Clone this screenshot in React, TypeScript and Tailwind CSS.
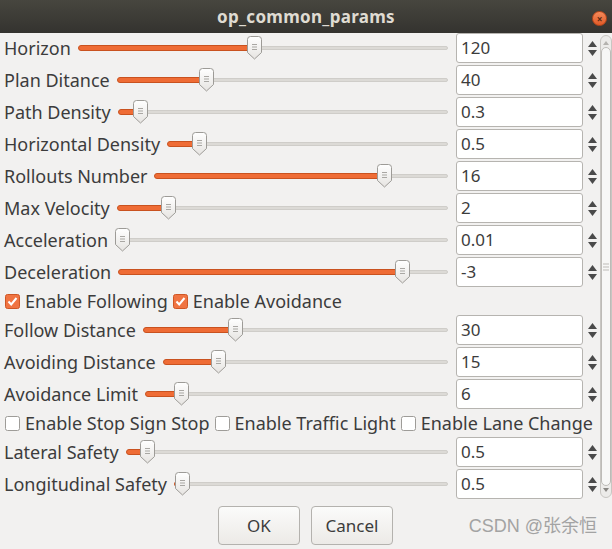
import React from "react";

type Row =
  | { kind: "slider"; label: string; value: string; frac: number }
  | { kind: "checks"; items: { label: string; checked: boolean }[] };

const rows: Row[] = [
  { kind: "slider", label: "Horizon", value: "120", frac: 0.475 },
  { kind: "slider", label: "Plan Ditance", value: "40", frac: 0.26 },
  { kind: "slider", label: "Path Density", value: "0.3", frac: 0.05 },
  { kind: "slider", label: "Horizontal Density", value: "0.5", frac: 0.094 },
  { kind: "slider", label: "Rollouts Number", value: "16", frac: 0.8 },
  { kind: "slider", label: "Max Velocity", value: "2", frac: 0.139 },
  { kind: "slider", label: "Acceleration", value: "0.01", frac: 0 },
  { kind: "slider", label: "Deceleration", value: "-3", frac: 0.88 },
  {
    kind: "checks",
    items: [
      { label: "Enable Following", checked: true },
      { label: "Enable Avoidance", checked: true },
    ],
  },
  { kind: "slider", label: "Follow Distance", value: "30", frac: 0.294 },
  { kind: "slider", label: "Avoiding Distance", value: "15", frac: 0.18 },
  { kind: "slider", label: "Avoidance Limit", value: "6", frac: 0.1 },
  {
    kind: "checks",
    items: [
      { label: "Enable Stop Sign Stop", checked: false },
      { label: "Enable Traffic Light", checked: false },
      { label: "Enable Lane Change", checked: false },
    ],
  },
  { kind: "slider", label: "Lateral Safety", value: "0.5", frac: 0.046 },
  { kind: "slider", label: "Longitudinal Safety", value: "0.5", frac: 0.004 },
];

function Handle() {
  return (
    <svg width="15" height="24" viewBox="0 0 15 24">
      <defs>
        <linearGradient id="hg" x1="0" y1="0" x2="0" y2="1">
          <stop offset="0" stopColor="#ffffff" />
          <stop offset="1" stopColor="#e6e4e1" />
        </linearGradient>
      </defs>
      <path
        d="M3.5 0.5 H11.5 Q14.5 0.5 14.5 3.5 V16.5 L7.5 23 L0.5 16.5 V3.5 Q0.5 0.5 3.5 0.5 Z"
        fill="url(#hg)"
        stroke="#9d9b97"
      />
      <path d="M5 8.5 H10 M5 11 H10 M5 13.5 H10" stroke="#a9a7a3" strokeWidth="1" />
    </svg>
  );
}

function Slider({ frac }: { frac: number }) {
  return (
    <div className="relative flex-1 h-[30px] ml-[7px] mr-[8px]">
      <div className="absolute left-[1px] right-0 top-[13px] h-[4px] rounded-full bg-[#dcdad6] border border-[#cfcdc9]" />
      <div
        className="absolute left-0 top-[12px] h-[6px] rounded-full bg-[#ef6c35] border border-[#c9521f]"
        style={{ width: `calc(${frac} * (100% - 15px) + 8px)` }}
      />
      <div
        className="absolute top-[3px]"
        style={{ left: `calc(${frac} * (100% - 15px))` }}
      >
        <Handle />
      </div>
    </div>
  );
}

function Spin({ value }: { value: string }) {
  return (
    <div className="flex items-center">
      <div className="w-[127px] h-[30px] bg-white border border-[#b6b4b0] rounded-[3px] flex items-center pl-[4px] text-[17px] text-[#3c3c3c]">
        {value}
      </div>
      <div className="w-[17px] h-[30px] flex flex-col items-center justify-center gap-[3px] pl-[1px]">
        <svg width="9" height="6" viewBox="0 0 9 6">
          <path d="M4.5 0 L9 6 H0 Z" fill="#4a4a4a" />
        </svg>
        <svg width="9" height="6" viewBox="0 0 9 6">
          <path d="M0 0 H9 L4.5 6 Z" fill="#4a4a4a" />
        </svg>
      </div>
    </div>
  );
}

function CheckBox({ checked }: { checked: boolean }) {
  if (checked) {
    return (
      <svg width="15" height="15" viewBox="0 0 15 15" className="shrink-0">
        <rect x="0.5" y="0.5" width="14" height="14" rx="2" fill="#f07442" stroke="#cf5624" />
        <path d="M3.5 7.5 L6.2 10.5 L11.5 4" stroke="#ffffff" strokeWidth="2" fill="none" />
      </svg>
    );
  }
  return (
    <svg width="15" height="15" viewBox="0 0 15 15" className="shrink-0">
      <rect x="0.5" y="0.5" width="14" height="14" rx="2" fill="#ffffff" stroke="#9e9c98" />
    </svg>
  );
}

export default function App() {
  return (
    <div className="w-[612px] h-[549px] bg-[#f2f1f0] flex flex-col overflow-hidden font-['Noto_Sans',sans-serif] text-[#3c3c3c]">
      <div className="relative h-[33px] shrink-0 bg-gradient-to-b from-[#47463f] to-[#34332f] flex items-center justify-center">
        <span className="text-[17px] font-bold text-[#dfdbd2] tracking-[0.3px]">op_common_params</span>
        <div className="absolute right-[5px] top-[11px] w-[15px] h-[15px] rounded-full bg-gradient-to-b from-[#f58a5a] to-[#e05a26] border border-[#b8461a] flex items-center justify-center">
          <span className="text-[10px] leading-none text-[#5a2a14] font-bold">×</span>
        </div>
      </div>
      <div className="flex h-[467px] shrink-0">
        <div className="flex-1 flex flex-col gap-[2px] pl-[4px]">
          {rows.map((r, i) =>
            r.kind === "slider" ? (
              <div key={i} className="flex items-center h-[30px]">
                <span className="text-[18px] whitespace-nowrap leading-none">{r.label}</span>
                <Slider frac={r.frac} />
                <Spin value={r.value} />
              </div>
            ) : (
              <div key={i} className="flex items-center h-[24px] gap-[5px] pl-[1px]">
                {r.items.map((it, j) => (
                  <div key={j} className="flex items-center gap-[5px]">
                    <CheckBox checked={it.checked} />
                    <span className="text-[18px] whitespace-nowrap leading-none">{it.label}</span>
                  </div>
                ))}
              </div>
            )
          )}
        </div>
        <div className="w-[12px] mt-[2px] mb-[2px] rounded-t-[6px] rounded-b-[6px] border border-[#c8c6c2] bg-[#ecebe9] flex flex-col items-center">
          <svg width="8" height="8" viewBox="0 0 8 8" className="mt-[3px] shrink-0">
            <path d="M4 2 L7 6 H1 Z" fill="#b4b2ae" />
          </svg>
          <div className="flex-1 w-[10px] rounded-[5px] border border-[#bdbbb7] bg-[#f7f7f6] flex items-center justify-center">
            <svg width="6" height="8" viewBox="0 0 6 8">
              <path d="M0 1 H6 M0 4 H6 M0 7 H6" stroke="#bdbbb7" />
            </svg>
          </div>
          <svg width="8" height="8" viewBox="0 0 8 8" className="mb-[3px] shrink-0">
            <path d="M1 2 H7 L4 6 Z" fill="#8a8884" />
          </svg>
        </div>
      </div>
      <div className="relative flex-1 flex items-start pt-[6px] pl-[218px] gap-[11px]">
        <button className="w-[82px] h-[39px] rounded-[4px] border border-[#b4b2ae] bg-gradient-to-b from-[#fbfbfa] to-[#eceae7] text-[17px] text-[#3c3c3c]">
          OK
        </button>
        <button className="w-[82px] h-[39px] rounded-[4px] border border-[#b4b2ae] bg-gradient-to-b from-[#fbfbfa] to-[#eceae7] text-[17px] text-[#3c3c3c]">
          Cancel
        </button>
        <span className="absolute right-[15px] top-[13px] text-[18px] text-[#a3a3a3] font-['Liberation_Sans','Noto_Sans_CJK_SC',sans-serif]">
          CSDN @张余恒
        </span>
      </div>
    </div>
  );
}
